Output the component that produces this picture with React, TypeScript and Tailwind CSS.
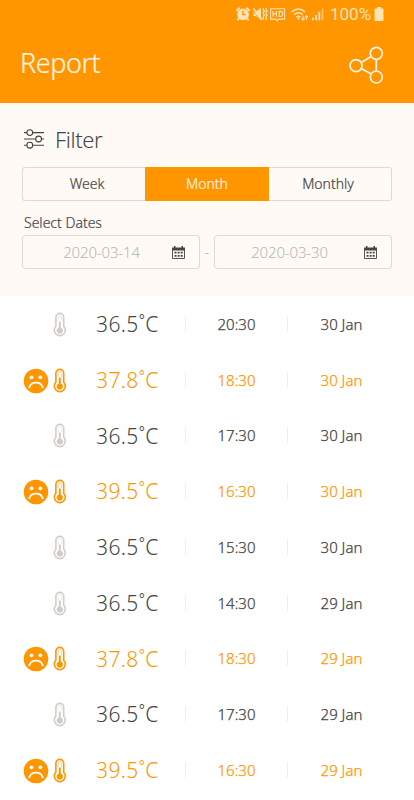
import React from 'react';

const readings = [
  { id: 1, temp: '36.5', time: '20:30', date: '30 Jan', fever: false },
  { id: 2, temp: '37.8', time: '18:30', date: '30 Jan', fever: true },
  { id: 3, temp: '36.5', time: '17:30', date: '30 Jan', fever: false },
  { id: 4, temp: '39.5', time: '16:30', date: '30 Jan', fever: true },
  { id: 5, temp: '36.5', time: '15:30', date: '30 Jan', fever: false },
  { id: 6, temp: '36.5', time: '14:30', date: '29 Jan', fever: false },
  { id: 7, temp: '37.8', time: '18:30', date: '29 Jan', fever: true },
  { id: 8, temp: '36.5', time: '17:30', date: '29 Jan', fever: false },
  { id: 9, temp: '39.5', time: '16:30', date: '29 Jan', fever: true },
];

const StatusBar: React.FC = () => (
  <div className="flex h-[29px] items-center pl-[235px] text-[#ffe3b5]">
    {/* alarm, mute, HD, wifi and signal */}
    <svg width="92" height="16" viewBox="0 0 92 16" fill="none" stroke="currentColor" className="mt-[-2px] shrink-0">
      <circle cx="8" cy="8.4" r="5.9" fill="currentColor" stroke="none" />
      <path d="M1.4 4.8 4.7 1.8M14.6 4.8l-3.3-3M4.2 12.2l-1.8 2.2M11.8 12.2l1.8 2.2" strokeWidth="1.9" />
      <path d="M7.8 4.8v3.9h3" stroke="#ff9600" strokeWidth="1.3" />
      <path d="M18.5 5.7h2.3l5.2-3.9v12.500l-5.200-4.300h-2.300z" fill="currentColor" stroke="none" />
      <path d="M17.300 3.800 25.500 14.400" stroke="#ff9600" strokeWidth=".8" />
      <path d="M18.300 2.300 27 13.500" strokeWidth="1.4" />
      <path d="M28.400 2v2l1 1-1 1v2l1 1-1 1v4M31.100 2v2l1 1-1 1v2l1 1-1 1v4" strokeWidth="1.3" />
      <path d="M35.600 2.700h14v10.400h-6l-1.500 1.800-1.500-1.800h-5z" strokeWidth="1.1" />
      <path d="M38 5v5.800M41.500 5v5.800M38 7.900h3.500M44.200 5.300v5.200h1.200q2.300-.3 2.300-2.600t-2.300-2.600z" strokeWidth="1.2" />
      <path d="M56.600 6q6.800-6 13.600 0M59 8.500q4.400-3.600 8.800 0M61.300 11q2.100-1.700 4.200 0" strokeWidth="1.5" />
      <path d="M61.600 11.400h3.600l-1.800 2.500z" fill="currentColor" stroke="none" />
      <path d="M68 9.500v4.600M66.400 12.400l1.600 1.700 1.600-1.700M71.500 14.200V9.700M69.900 11.400l1.600-1.700 1.600 1.700" strokeWidth="1.1" />
      <path d="M78 14.200v-2.400M81.100 14.200V9" strokeWidth="1.800" />
      <path d="M84.300 14.200V5.800" strokeWidth="1.800" />
      <path d="M87.500 14.200V2.500" strokeWidth="1.600" opacity=".65" />
    </svg>
    <span className="ml-[3px] w-[42px] whitespace-nowrap font-['Roboto',sans-serif] text-[17px] leading-none">100%</span>
    <svg width="10" height="14" viewBox="0 0 10 14" fill="currentColor" className="ml-[2px] mt-[-1px] shrink-0">
      <path d="M3 0h4v1.500h1.800q.7 0 .7.7v11.100q0 .7-.7.7H1.200Q.5 14 .5 13.300V2.200Q.5 1.500 1.200 1.500H3z" />
    </svg>
  </div>
);

const ShareIcon: React.FC = () => (
  <svg width="36" height="40" viewBox="0 0 36 40" fill="none" stroke="#fff5e3" strokeWidth="1.7">
    <circle cx="28.3" cy="8.3" r="6" />
    <circle cx="8" cy="20.6" r="6" />
    <circle cx="28.3" cy="32" r="6" />
    <path d="M13.200 17.500 23.200 11.500M13.200 23.600l10 5.500M28.300 14.300V26" />
  </svg>
);

const FilterIcon: React.FC = () => (
  <svg width="22" height="20" viewBox="0 0 22 20" fill="none" stroke="#444" strokeWidth="1.1">
    <path d="M1 3.600h3M9.700 3.600H21M1 10h11.700M18.500 10H21M1 16.200h3M9.700 16.200H21" />
    <circle cx="6.800" cy="3.600" r="2.900" />
    <circle cx="15.600" cy="10" r="2.900" />
    <circle cx="6.800" cy="16.200" r="2.900" />
  </svg>
);

const CalendarIcon: React.FC = () => (
  <svg width="13" height="14" viewBox="0 0 13 14" fill="#444" className="mt-px shrink-0">
    <path d="M0 1.500h2V0h1.500v1.500h6V0H11v1.500h2V4.500H0z" />
    <path d="M.500 4v8.500h12V4" fill="none" stroke="#555" />
    <path d="M2.500 5.800h2v1.700h-2zM5.600 5.800h2v1.700h-2zM8.700 5.800h2v1.700h-2zM2.500 9h2v1.700h-2zM5.600 9h2v1.700h-2zM8.700 9h2v1.700h-2z" />
  </svg>
);

const SadFace: React.FC = () => (
  <svg width="26" height="26" viewBox="0 0 26 26">
    <circle cx="13" cy="13" r="12.300" fill="#ff9600" />
    <circle cx="8.500" cy="9.300" r="1.900" fill="#fff" />
    <circle cx="17.300" cy="9.300" r="1.900" fill="#fff" />
    <path d="M6.300 19.300c2-6.200 11.400-6.200 13.400 0" fill="none" stroke="#fff" strokeWidth="1.900" strokeLinecap="round" />
  </svg>
);

const Thermometer: React.FC<{ fever: boolean }> = ({ fever }) => (
  <svg width="14" height="26" viewBox="0 0 14 26" fill="none" stroke="currentColor" className={fever ? 'text-[#ff9600]' : 'text-[#d2cdc8]'}>
    <path d="M2.900 14.200V5.300a3.900 3.900 0 0 1 7.800 0v8.900a5.500 5.500 0 1 1-7.800 0z" strokeWidth="1.600" />
    <path d="M5 9V5.400a1.800 1.800 0 0 1 3.600 0v3.600" strokeWidth=".8" opacity=".55" />
    <path d="M6.800 9.500v8" strokeWidth="2" />
    <circle cx="6.800" cy="18.600" r="3.100" fill="currentColor" stroke="none" />
  </svg>
);

const DateField: React.FC<{ value: string; className: string }> = ({ value, className }) => (
  <div className={`flex h-[34px] w-[178px] items-center rounded-[3px] border-[1.5px] border-[#dfdad5] pr-[14px] ${className}`}>
    <span className="flex-1 text-center text-[15px] font-light tracking-[-0.15px] text-[#b8b4b0]">{value}</span>
    <CalendarIcon />
  </div>
);

export default function App() {
  return (
    <div className="h-[800px] w-[414px] overflow-hidden bg-white font-['Noto_Sans','Open_Sans',sans-serif] text-[#444]">
      <header className="h-[103px] bg-[#ff9600]">
        <StatusBar />
        <div className="flex h-[72px] items-center justify-between pl-5 pr-[30px]">
          <h1 className="pb-[3px] text-[27px] font-light tracking-[-0.45px] text-[#fff5e3] [-webkit-text-stroke:0.2px]">Report</h1>
          <ShareIcon />
        </div>
      </header>

      <section className="h-[193px] bg-[#fffaf5] px-[22px] pt-[19px]">
        <div className="flex h-[34px] items-center gap-2.5 pl-px">
          <FilterIcon />
          <h2 className="text-[22px] font-light tracking-[-0.4px]">Filter</h2>
        </div>

        <div className="mt-[11px] flex h-[34px] w-[370px] text-sm font-light [-webkit-text-stroke:0.2px]">
          <button className="w-[123px] rounded-l-[3px] border border-r-0 border-[#dfdad5] pl-1.5">Week</button>
          <button className="w-[124px] bg-[#ff9600] text-[#fff5e3]">Month</button>
          <button className="w-[123px] rounded-r-[3px] border border-l-0 border-[#dfdad5] pr-1">Monthly</button>
        </div>

        <p className="mt-[12px] pl-0.5 text-sm leading-[20px] font-light [-webkit-text-stroke:0.2px]">Select Dates</p>
        <div className="mt-[2px] flex items-center">
          <DateField value="2020-03-14" className="pl-[8px]" />
          <span className="w-[14px] text-center text-sm font-light text-[#b8b4b0]">-</span>
          <DateField value="2020-03-30" className="" />
        </div>
      </section>

      <ul>
        {readings.map((r) => (
          <li key={r.id} className={`flex h-[55.75px] items-center pl-[22.5px] font-light ${r.fever ? 'text-[#ff9600]' : 'text-[#444]'}`}>
            <div className="flex w-[73.5px] items-center pt-[2px]">
              <div className="mr-[4px] h-[26px] w-[26px]">{r.fever && <SadFace />}</div>
              <Thermometer fever={r.fever} />
            </div>
            <span className="w-[89px] whitespace-nowrap pt-[2px] text-[21px] tracking-[0.4px]">{r.temp}˚C</span>
            <span className="w-[103px] border-x border-[#efefef] text-center text-[15px] leading-[16px] [-webkit-text-stroke:0.25px]">{r.time}</span>
            <span className="w-[107px] text-center text-[15px] leading-[16px] [-webkit-text-stroke:0.25px]">{r.date}</span>
          </li>
        ))}
      </ul>
    </div>
  );
}
